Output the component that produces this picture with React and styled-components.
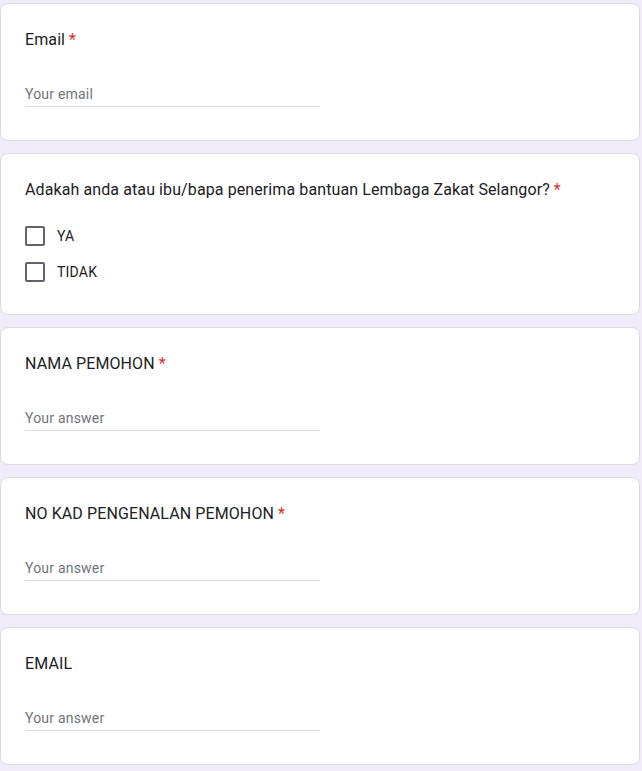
import styled, { createGlobalStyle } from "styled-components";

const GlobalStyle = createGlobalStyle`
  html, body {
    margin: 0;
    padding: 0;
    background: #f0ebf8;
  }
  body {
    font-family: Roboto, "Liberation Sans", sans-serif;
  }
`;

const Page = styled.div`
  display: flex;
  flex-direction: column;
  gap: 12px;
  padding: 3px 2px 12px 0;
`;

const Card = styled.div`
  background: #fff;
  border: 1px solid #dadce0;
  border-radius: 8px;
  padding: 24px;
`;

const Title = styled.div`
  font-family: Roboto, "Liberation Sans", sans-serif;
  font-size: 16px;
  line-height: 24px;
  letter-spacing: 0.1px;
  color: #202124;
`;

const Required = styled.span`
  color: #d93025;
  margin-left: 4px;
`;

const Input = styled.div`
  width: 50%;
  margin-top: 30px;
  margin-bottom: 9px;
  height: 24px;
  line-height: 24px;
  font-size: 14px;
  letter-spacing: 0.2px;
  color: #70757a;
  border-bottom: 1px solid #dadce0;
`;

const Options = styled.div`
  margin-top: 16px;
  display: flex;
  flex-direction: column;
`;

const Option = styled.label`
  display: flex;
  align-items: center;
  gap: 12px;
  height: 36px;
  font-size: 14px;
  letter-spacing: 0.2px;
  color: #202124;
`;

const Box = styled.span`
  box-sizing: border-box;
  width: 20px;
  height: 20px;
  border: 2px solid #5f6368;
  border-radius: 2px;
`;

function TextQuestion({ title, required, placeholder }) {
  return (
    <Card>
      <Title>
        {title}
        {required && <Required>*</Required>}
      </Title>
      <Input>{placeholder}</Input>
    </Card>
  );
}

export default function App() {
  return (
    <>
      <GlobalStyle />
      <Page>
        <TextQuestion title="Email" required placeholder="Your email" />
        <Card>
          <Title>
            Adakah anda atau ibu/bapa penerima bantuan Lembaga Zakat Selangor?
            <Required>*</Required>
          </Title>
          <Options>
            <Option>
              <Box />
              YA
            </Option>
            <Option>
              <Box />
              TIDAK
            </Option>
          </Options>
        </Card>
        <TextQuestion title="NAMA PEMOHON" required placeholder="Your answer" />
        <TextQuestion
          title="NO KAD PENGENALAN PEMOHON"
          required
          placeholder="Your answer"
        />
        <TextQuestion title="EMAIL" placeholder="Your answer" />
      </Page>
    </>
  );
}
